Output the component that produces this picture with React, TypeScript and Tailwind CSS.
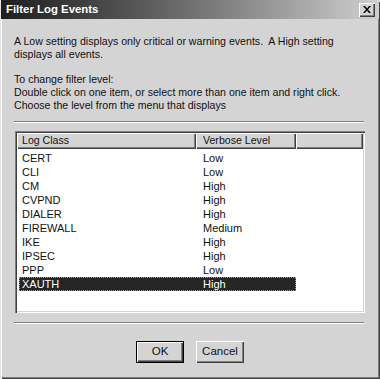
import React from "react";

const rows: [string, string][] = [
  ["CERT", "Low"],
  ["CLI", "Low"],
  ["CM", "High"],
  ["CVPND", "High"],
  ["DIALER", "High"],
  ["FIREWALL", "Medium"],
  ["IKE", "High"],
  ["IPSEC", "High"],
  ["PPP", "Low"],
  ["XAUTH", "High"],
];

export default function App() {
  return (
    <div
      className="w-[380px] h-[379px] bg-[#d4d4d4] flex flex-col text-[10.6px] text-[#111] shadow-[inset_1px_1px_0_#e4e4e4,inset_2px_2px_0_#ffffff,inset_-1px_-1px_0_#404040,inset_-2px_-2px_0_#808080]"
      style={{ fontFamily: '"Liberation Sans", Arial, sans-serif' }}
    >
      {/* Title bar */}
      <div className="mx-[1px] h-[19px] flex items-center justify-between bg-gradient-to-r from-[#1e1e1e] via-[#707070] to-[#d0d0d0] pl-[5px] pr-[4px]">
        <span className="text-white font-bold text-[11.4px] leading-none">Filter Log Events</span>
        <div className="w-[16px] h-[14px] bg-[#d4d4d4] flex items-center justify-center shadow-[inset_1px_1px_0_#ffffff,inset_-1px_-1px_0_#404040,inset_-2px_-2px_0_#808080]">
          <svg width="8" height="7" viewBox="0 0 8 7">
            <path d="M0 0h2l2 2.5 2-2.5h2L5 3.5 8 7H6L4 4.5 2 7H0l3-3.5z" fill="#000" />
          </svg>
        </div>
      </div>

      {/* Body */}
      <div className="flex flex-col flex-1 pl-[14px] pr-[16px]">
        <p className="mt-[16px] leading-[12.5px]">
          A Low setting displays only critical or warning events.&nbsp; A High setting
          <br />
          displays all events.
        </p>
        <p className="mt-[13px] leading-[13px]">
          To change filter level:
          <br />
          Double click on one item, or select more than one item and right click.
          <br />
          Choose the level from the menu that displays
        </p>

        <div className="mt-[9px] h-[2px] border-t border-[#808080] border-b border-b-white" />

        {/* List box */}
        <div className="mt-[8px] ml-[1px] mr-[-1px] h-[182px] bg-white shadow-[inset_1px_1px_0_#808080,inset_2px_2px_0_#404040,inset_-1px_-1px_0_#ffffff,inset_-2px_-2px_0_#d4d4d4] p-[2px] flex flex-col">
          <div className="flex h-[16px] shrink-0">
            <div className="w-[179px] bg-[#d4d4d4] flex items-center pl-[5px] shadow-[inset_1px_1px_0_#ffffff,inset_-1px_-1px_0_#404040,inset_-2px_-2px_0_#808080]">
              Log Class
            </div>
            <div className="w-[100px] bg-[#d4d4d4] flex items-center pl-[7px] shadow-[inset_1px_1px_0_#ffffff,inset_-1px_-1px_0_#404040,inset_-2px_-2px_0_#808080]">
              Verbose Level
            </div>
            <div className="flex-1 bg-[#d4d4d4] shadow-[inset_1px_1px_0_#ffffff,inset_-1px_-1px_0_#404040,inset_-2px_-2px_0_#808080]" />
          </div>
          <div className="flex flex-col pt-[2px] pl-[2px] text-[11px]">
            {rows.map(([name, level], i) => {
              const sel = i === rows.length - 1;
              return (
                <div
                  key={name}
                  className={
                    sel
                      ? "flex h-[14px] w-[277px] items-center bg-[#262626] text-white outline outline-1 outline-dotted outline-[#9a9a9a] -outline-offset-1"
                      : "flex h-[14px] w-[277px] items-center"
                  }
                >
                  <span className="w-[184px] pl-[3px]">{name}</span>
                  <span className="flex-1">{level}</span>
                </div>
              );
            })}
          </div>
        </div>

        <div className="mt-[9px] h-[2px] border-t border-[#808080] border-b border-b-white" />

        {/* Buttons */}
        <div className="mt-[17px] flex justify-center gap-[12px] pl-[2px]">
          <button className="w-[48px] h-[22px] bg-[#d4d4d4] border border-black shadow-[inset_1px_1px_0_#ffffff,inset_-1px_-1px_0_#404040,inset_-2px_-2px_0_#808080] flex items-center justify-center text-[11.5px]">
            OK
          </button>
          <button className="w-[48px] h-[22px] bg-[#d4d4d4] shadow-[inset_1px_1px_0_#ffffff,inset_-1px_-1px_0_#404040,inset_-2px_-2px_0_#808080] flex items-center justify-center text-[11.5px]">
            Cancel
          </button>
        </div>
      </div>
    </div>
  );
}
